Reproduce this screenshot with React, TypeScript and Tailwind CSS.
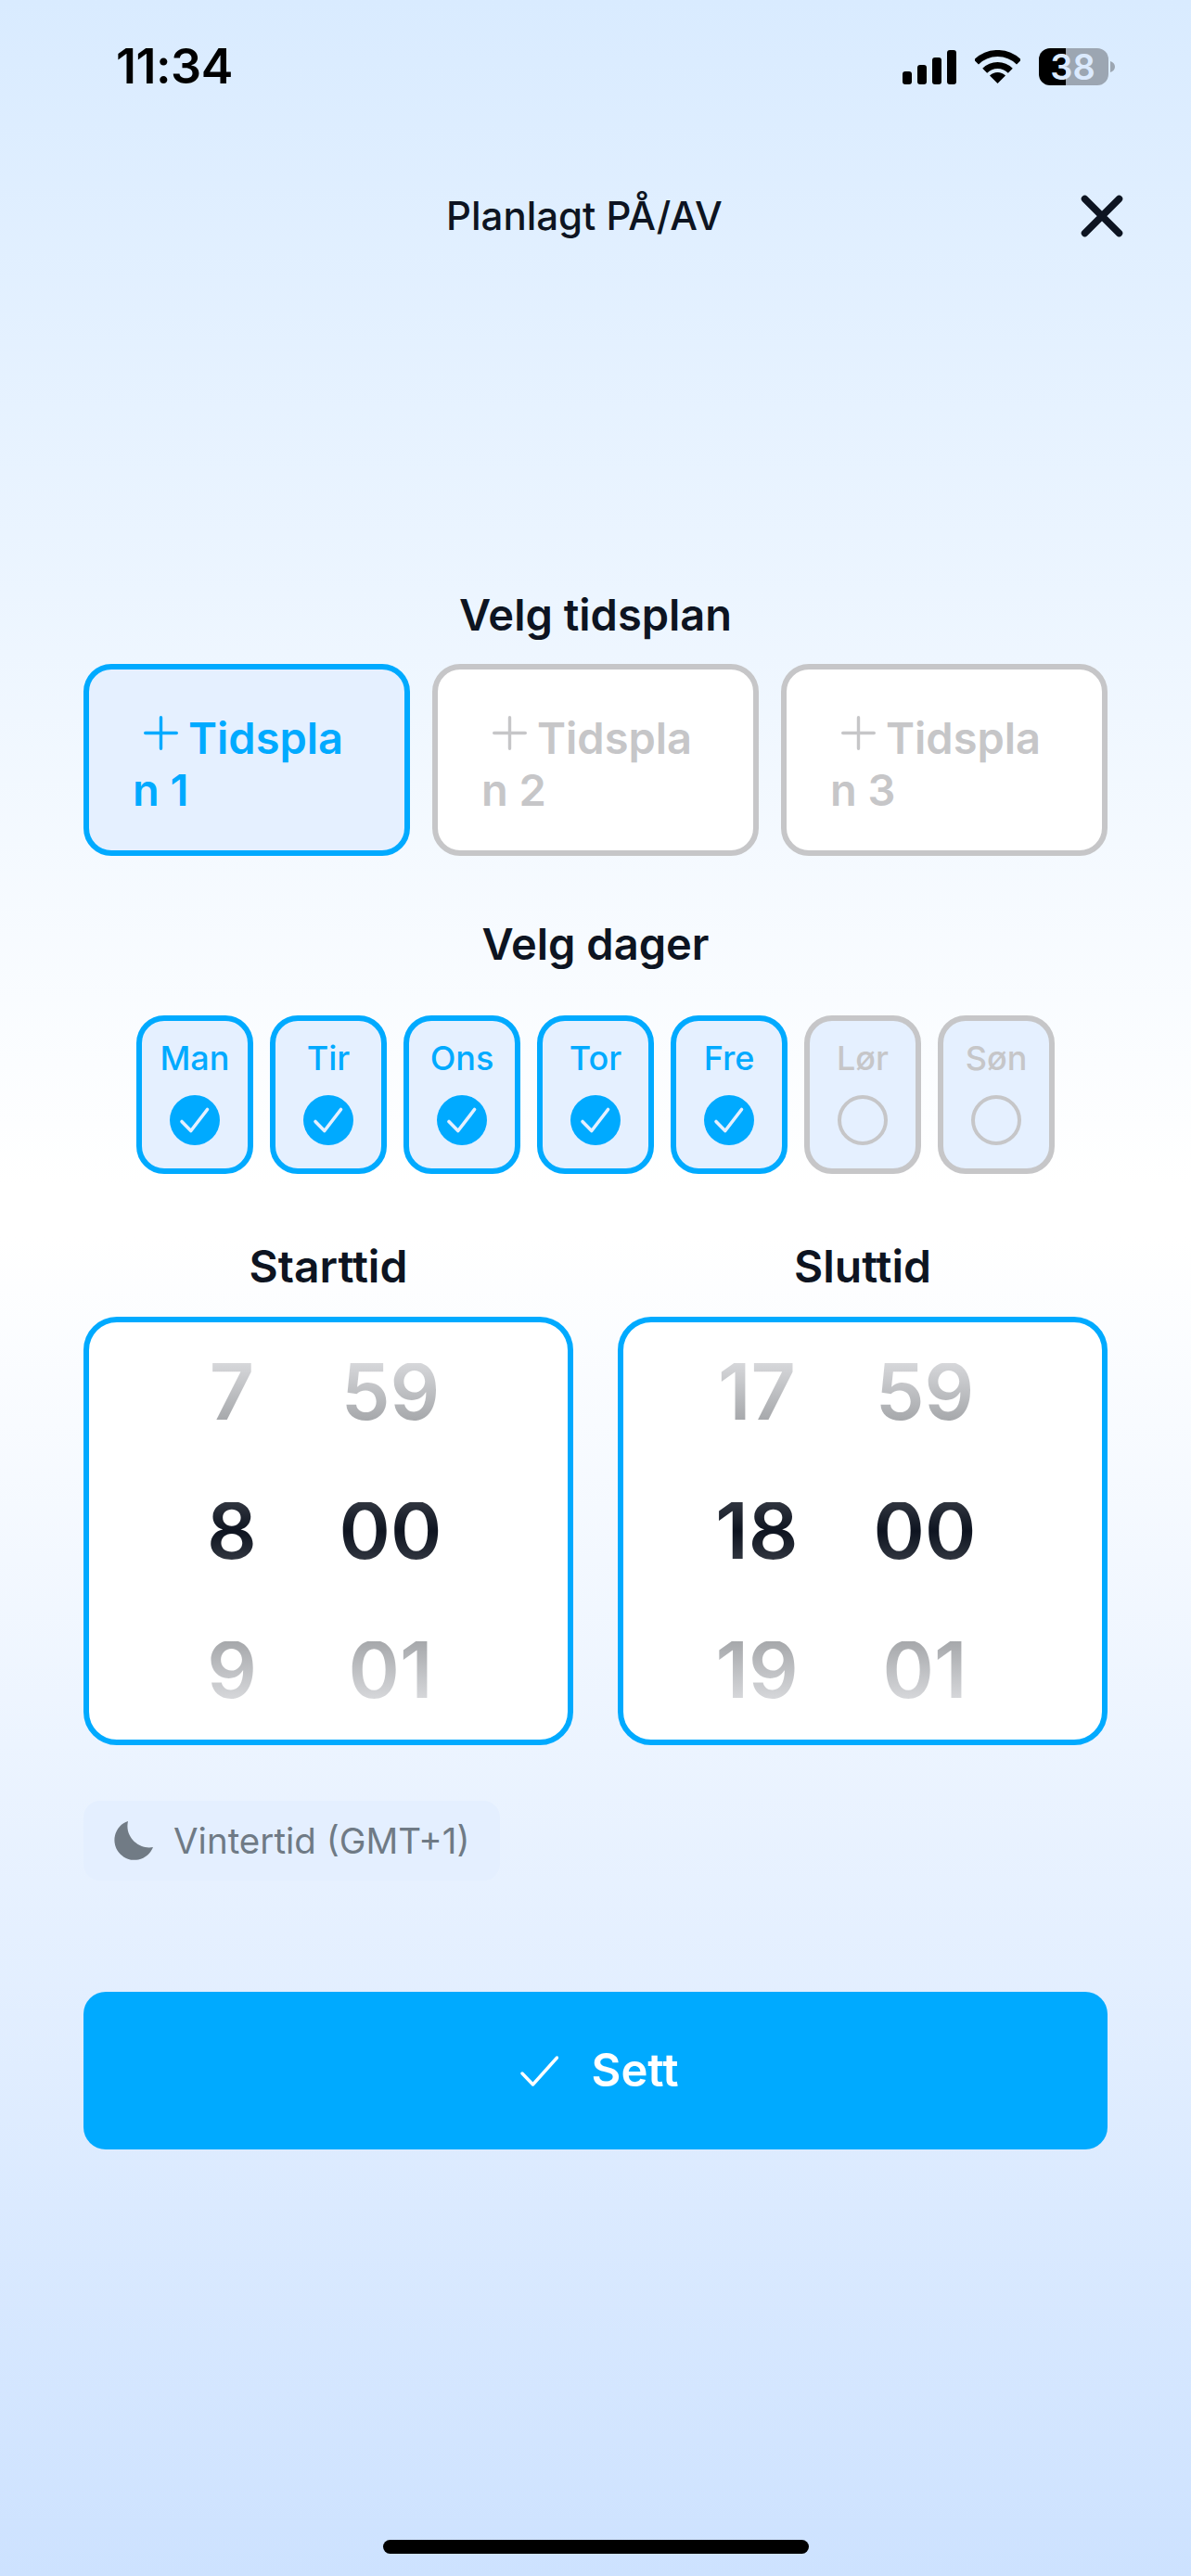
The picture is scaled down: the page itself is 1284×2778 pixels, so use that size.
import React from "react";

const DAYS = [
  { label: "Man", on: true },
  { label: "Tir", on: true },
  { label: "Ons", on: true },
  { label: "Tor", on: true },
  { label: "Fre", on: true },
  { label: "Lør", on: false },
  { label: "Søn", on: false },
];

function Plus({ active }: { active: boolean }) {
  return (
    <svg
      viewBox="0 0 37 37"
      className="inline-block w-[37px] h-[37px] ml-[12px] mr-[11px] align-[4px]"
      fill="none"
      stroke={active ? "#00aaff" : "#c6c6c8"}
      strokeWidth="3.4"
      strokeLinecap="round"
    >
      <path d="M18.5 1.7V35.3M1.7 18.5H35.3" />
    </svg>
  );
}

function PlanCard({ n, active }: { n: number; active?: boolean }) {
  return (
    <div
      className={
        active
          ? "w-[352px] h-[207px] rounded-[30px] border-[6px] border-[#00aaff] bg-[#e5f0ff] pl-[47px] pt-[46px] text-[#00aaff]"
          : "w-[352px] h-[207px] rounded-[30px] border-[6px] border-[#c6c6c8] bg-white pl-[47px] pt-[46px] text-[#c6c6c8]"
      }
    >
      <div className="w-[240px] break-all text-[47px] leading-[56px] font-semibold">
        <Plus active={!!active} />
        {`Tidsplan ${n}`}
      </div>
    </div>
  );
}

function DayCard({ label, on }: { label: string; on: boolean }) {
  return (
    <div
      className={
        on
          ? "w-[126px] h-[171px] rounded-[30px] border-[6px] border-[#00aaff] bg-[#e5f0ff] flex flex-col items-center pt-[18px] text-[#00aaff]"
          : "w-[126px] h-[171px] rounded-[30px] border-[6px] border-[#c6c6c8] bg-[#e5f0ff] flex flex-col items-center pt-[18px] text-[#c6c6c8]"
      }
    >
      <div className="text-[36px] leading-[44px] font-medium">{label}</div>
      <div className="mt-[18px]">
        {on ? (
          <svg viewBox="0 0 54 54" className="w-[54px] h-[54px] block">
            <circle cx="27" cy="27" r="27" fill="#00aaff" />
            <path
              d="M13 28.5L22.8 38.5L40.5 15.5"
              fill="none"
              stroke="#e5f0ff"
              strokeWidth="3.6"
              strokeLinecap="round"
              strokeLinejoin="round"
            />
          </svg>
        ) : (
          <div className="w-[54px] h-[54px] rounded-full border-[4px] border-[#c6c6c8]" />
        )}
      </div>
    </div>
  );
}

function Digit({ value, kind }: { value: string; kind: "top" | "mid" | "bottom" }) {
  const cls =
    kind === "top"
      ? "bg-[linear-gradient(180deg,#d6d7da,#a6a8ab)]"
      : kind === "bottom"
        ? "bg-[linear-gradient(180deg,#a6a8ab,#d6d7da)]"
        : "bg-[linear-gradient(180deg,#30353f,#0e1420_50%,#30353f)]";
  return (
    <div className="h-[150px] flex items-center">
      <div className={`w-full text-center text-[84px] leading-[62px] font-semibold bg-clip-text text-transparent ${cls}`}>{value}</div>
    </div>
  );
}

function Picker({
  title,
  hours,
  hourClass,
}: {
  title: string;
  hours: [string, string, string];
  hourClass: string;
}) {
  const mins = ["59", "00", "01"];
  const kinds = ["top", "mid", "bottom"] as const;
  return (
    <div className="w-[528px]">
      <div className="text-center text-[48px] leading-[54px] font-semibold text-[#0d1421]">{title}</div>
      <div className="mt-[27px] h-[462px] rounded-[36px] border-[6px] border-[#00aaff] bg-white flex">
        <div className={hourClass}>
          {hours.map((h, i) => (
            <Digit key={i} value={h} kind={kinds[i]} />
          ))}
        </div>
        <div className="w-[140px]">
          {mins.map((m, i) => (
            <Digit key={i} value={m} kind={kinds[i]} />
          ))}
        </div>
      </div>
    </div>
  );
}

export default function App() {
  return (
    <div className="w-[1284px] h-[2778px] flex flex-col bg-[linear-gradient(180deg,#d9ebff_0%,#ffffff_46%,#ffffff_48%,#cde2ff_100%)] font-['Inter',sans-serif] text-[#0d1421]">
      {/* status bar */}
      <div className="mt-[52px] h-[40px] pl-[125px] pr-[82px] flex items-center justify-between">
        <div className="text-[52px] leading-[40px] font-semibold text-black tracking-[-0.5px]">11:34</div>
        <div className="flex items-center">
          <svg viewBox="0 0 58 37" className="w-[58px] h-[37px] block" fill="#000">
            <rect x="0" y="23" width="10" height="14" rx="3" />
            <rect x="16" y="16" width="10" height="21" rx="3" />
            <rect x="32" y="8" width="10" height="29" rx="3" />
            <rect x="48" y="0" width="10" height="37" rx="3" />
          </svg>
          <svg viewBox="0 0 49 36" className="w-[49px] h-[36px] block ml-[20px]">
            <path d="M1.5 13A32.5 32.5 0 0 1 47.5 13" fill="none" stroke="#000" strokeWidth="7" />
            <path d="M10.7 22.2A19.5 19.5 0 0 1 38.3 22.2" fill="none" stroke="#000" strokeWidth="7" />
            <path d="M24.5 36L16 27.5A12 12 0 0 1 33 27.5Z" fill="#000" />
          </svg>
          <div className="ml-[20px] w-[75px] h-[40px] rounded-[12px] flex items-center justify-center pr-[2px] text-[38px] font-semibold text-[#dbeafe] bg-[linear-gradient(90deg,#000_39%,#9ca6b2_39%)]">
            38
          </div>
          <svg viewBox="0 0 5 12" className="w-[5px] h-[12px] block ml-[2px]" fill="#9ca6b2">
            <path d="M0 0C3 1 5 3 5 6S3 11 0 12Z" />
          </svg>
        </div>
      </div>

      {/* header */}
      <div className="mt-[108px] h-[66px] pl-[481px] pr-[73px] flex items-center justify-between">
        <div className="text-[42px] leading-[66px] font-medium">Planlagt PÅ/AV</div>
        <svg
          viewBox="0 0 46 46"
          className="w-[46px] h-[46px] block"
          fill="none"
          stroke="#0d1421"
          strokeWidth="7.5"
          strokeLinecap="round"
        >
          <path d="M4.5 4.5L41.5 41.5M41.5 4.5L4.5 41.5" />
        </svg>
      </div>

      {/* schedule */}
      <div className="mt-[370px] text-center text-[47px] leading-[54px] font-semibold">Velg tidsplan</div>
      <div className="mt-[26px] px-[90px] flex gap-[24px]">
        <PlanCard n={1} active />
        <PlanCard n={2} />
        <PlanCard n={3} />
      </div>

      {/* days */}
      <div className="mt-[68px] text-center text-[47px] leading-[54px] font-semibold">Velg dager</div>
      <div className="mt-[50px] flex justify-center gap-[18px]">
        {DAYS.map((d) => (
          <DayCard key={d.label} label={d.label} on={d.on} />
        ))}
      </div>

      {/* pickers */}
      <div className="mt-[73px] px-[90px] flex gap-[48px]">
        <Picker title="Starttid" hours={["7", "8", "9"]} hourClass="w-[140px] ml-[84px] mr-[31px]" />
        <Picker title="Sluttid" hours={["17", "18", "19"]} hourClass="w-[140px] ml-[74px] mr-[41px]" />
      </div>

      {/* timezone chip */}
      <div className="mt-[60px] ml-[90px] w-[449px] h-[86px] rounded-[18px] bg-[#e4efff] flex items-center pl-[33px]">
        <svg viewBox="0 0 42 42" className="w-[42px] h-[42px] block" fill="#717b85">
          <path d="M15 0A21.5 21.5 0 1 0 42 28C28 31 11 18 15 0Z" />
        </svg>
        <div className="ml-[22px] text-[38.5px] leading-[50px] text-[#6f7a85]">Vintertid (GMT+1)</div>
      </div>

      {/* action */}
      <div className="mt-[120px] mx-[90px] h-[170px] rounded-[24px] bg-[#00aaff] flex items-center justify-center gap-[36px] pl-[8px] text-white">
        <svg
          viewBox="0 0 41 33"
          className="w-[41px] h-[33px] block"
          fill="none"
          stroke="#fff"
          strokeWidth="3.4"
          strokeLinecap="round"
          strokeLinejoin="round"
        >
          <path d="M2 19L13.5 31L39.5 2" />
        </svg>
        <div className="text-[49px] leading-[56px] font-semibold">Sett</div>
      </div>

      {/* home indicator */}
      <div className="mt-auto mb-[24px] mx-auto w-[459px] h-[15px] rounded-full bg-black" />
    </div>
  );
}
